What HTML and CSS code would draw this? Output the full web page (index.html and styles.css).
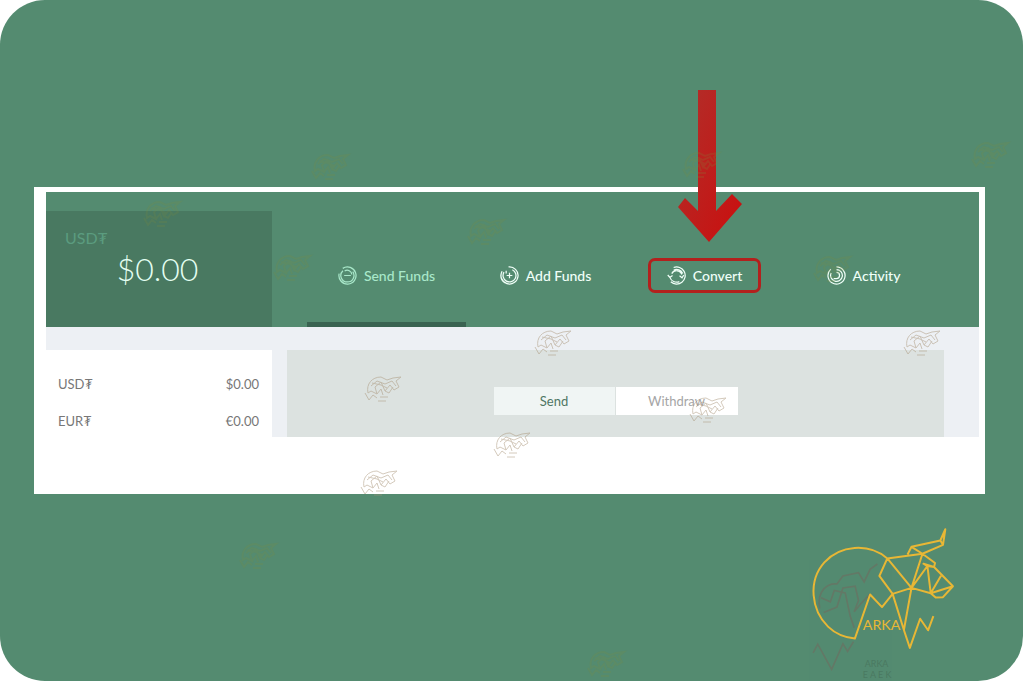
FILE: index.html
```
<!DOCTYPE html>
<html lang="en">

<head>
    <meta charset="UTF-8">
    <meta name="viewport" content="width=device-width, initial-scale=1.0">
    <title>Wallet - Convert</title>

    <link rel="stylesheet" href="styles.css">
</head>

<body>
    <!-- shared bull shape for the logo and the small marks -->
    <svg class="defs" width="0" height="0" aria-hidden="true">
        <symbol id="bull" viewBox="0 0 570 501" overflow="visible">
            <path d="M292 131 C235 83 149 91 102 143 C52 199 62 287 113 337 C137 360 164 370 194 373 L240 240 L276 278 L308 238 L268 184 Z L365 220 L308 238 L342 347 L365 220 L398 117 L292 131 M342 347 L360 401 L391 313 L415 348 L431 305 M353 119 L365 96 L452 77 L467 43 L460 90 L398 117 L365 96 M452 77 L460 90 M398 117 L436 145 L433 157 L401 147 L413 154 L365 220 L423 236 L490 215 L433 157 L413 154 L423 236 L454 183 M423 236 L438 249 L460 248 L490 215" />
        </symbol>
        <symbol id="mark" viewBox="0 0 40 32" overflow="visible">
            <path d="M5 20 C3 11 9 4 18 4 L24 7 L30 5 L38 4 L33 8 L36 14 L31 17 L27 12 L22 18 L18 9 L12 14 L14 21 L8 18 Z M8 13 L14 8 L22 11 L29 8 L33 13 M9 10 L18 12 L24 15 M22 18 L26 20 L30 14 M14 21 L18 16 L20 22 M2 20 L6 27 L10 22 L14 25 M17 24 H25 M15 28 H23" />
        </symbol>
    </svg>

    <main class="card">
        <section class="panel">
            <header class="topbar">
                <div class="balance">
                    <div class="balance-coin">USD₮</div>
                    <div class="balance-total">$0.00</div>
                </div>

                <nav class="tabs">
                    <a href="#send" class="tab active">
                        <span class="tab-label">
                            <svg class="tab-icon" viewBox="0 0 20 20">
                                <path d="M5 2.5 A9 9 0 1 1 1.2 8 M5.2 5 A6.8 6.8 0 0 0 10 16.8 A6.8 6.8 0 0 0 15.5 6 M7 5.2 A5 5 0 0 1 14.6 9 M6.5 10 H13.5" />
                            </svg>
                            Send Funds
                        </span>
                    </a>
                    <a href="#add" class="tab">
                        <span class="tab-label">
                            <svg class="tab-icon" viewBox="0 0 20 20">
                                <path d="M9 1 A9 9 0 1 1 2.2 5.5 M13 3.9 A6.8 6.8 0 1 1 4.2 6.5 M1 9 A9 9 0 0 0 5 17.5 M10 7 V13 M7 10 H13 M6.5 5 V8" />
                            </svg>
                            Add Funds
                        </span>
                    </a>
                    <a href="#convert" class="tab">
                        <span class="tab-label marked">
                            <svg class="tab-icon" viewBox="0 0 20 20">
                                <path d="M7 1.6 A9 9 0 1 1 4 16.6 M0.8 9.5 L3 12 L5.8 10 M3 12 A7.5 7.5 0 0 0 13 16.4 M5 8 A5.8 5.8 0 0 1 15.6 9 M13.2 10.2 L15.8 12.4 L17.6 9.6 M7 4.4 A7 7 0 0 1 16.6 8" />
                            </svg>
                            Convert
                        </span>
                    </a>
                    <a href="#activity" class="tab">
                        <span class="tab-label">
                            <svg class="tab-icon" viewBox="0 0 20 20">
                                <path d="M10 1 A9 9 0 1 1 4 3.3 M10 3.8 A6.2 6.2 0 1 1 4.4 7.3 M10 6.8 A3.2 3.2 0 0 1 10 13.2 H7" />
                            </svg>
                            Activity
                        </span>
                    </a>
                </nav>
            </header>

            <div class="content">
                <ul class="coins">
                    <li><span>USD₮</span><span>$0.00</span></li>
                    <li><span>EUR₮</span><span>€0.00</span></li>
                </ul>

                <div class="form">
                    <button type="button" class="mode selected">Send</button>
                    <button type="button" class="mode">Withdraw</button>
                </div>
            </div>
        </section>

        <!-- arrow pointing at Convert -->
        <svg class="arrow" viewBox="0 0 64 154" aria-hidden="true">
            <linearGradient id="red" x1="0" y1="0" x2="1" y2="1">
                <stop offset="0" stop-color="#b0302b" />
                <stop offset="1" stop-color="#cb0e0e" />
            </linearGradient>
            <path fill="url(#red)" d="M20 1 H38 V122 L54 105 L64 115 L31 153 L0 118 L7 109 L20 122 Z" />
        </svg>

        <!-- small marks -->
        <svg class="marks" viewBox="0 0 1024 682" aria-hidden="true">
            <g class="gold">
                <use href="#mark" x="310" y="151" width="40" height="32" />
                <use href="#mark" x="142" y="198" width="40" height="32" />
                <use href="#mark" x="466" y="216" width="40" height="32" />
                <use href="#mark" x="272" y="252" width="40" height="32" />
                <use href="#mark" x="681" y="149" width="40" height="32" />
                <use href="#mark" x="970" y="139" width="40" height="32" />
                <use href="#mark" x="812" y="253" width="40" height="32" />
                <use href="#mark" x="238" y="540" width="40" height="32" />
                <use href="#mark" x="586" y="648" width="40" height="32" />
            </g>
            <g class="grey">
                <use href="#mark" x="533" y="327" width="40" height="32" />
                <use href="#mark" x="902" y="327" width="40" height="32" />
                <use href="#mark" x="363" y="373" width="40" height="32" />
                <use href="#mark" x="688" y="394" width="40" height="32" />
                <use href="#mark" x="492" y="429" width="40" height="32" />
                <use href="#mark" x="359" y="467" width="40" height="32" />
            </g>
        </svg>

        <svg class="logo" viewBox="0 0 570 501" role="img" aria-label="Arka">
            <g class="logo-shade">
                <path d="M88 282 C78 228 112 205 140 208 L158 184 L205 174 L222 202 L240 164 L262 148 M100 294 L140 278 L158 220 L195 215 L205 258 L192 292 L212 268 L240 238 M92 250 L120 262 L132 228 L165 235 L180 305 L192 340 M68 416 L82 390 L124 466 L158 389 L172 412 L190 382" />
                <text x="224" y="458">ARKA</text>
                <text x="218" y="492">E A E K</text>
            </g>
            <use href="#bull" width="570" height="501" class="logo-line" />
            <text x="218" y="346" class="logo-name">ARKA</text>
        </svg>
    </main>
</body>

</html>
```
FILE: styles.css
```
* {
    box-sizing: border-box;
}

body {
    margin: 0;
    background-color: white;
    font-family: Lato, "Noto Sans", sans-serif;
    font-size: 13px;
}

.defs {
    position: absolute;
}

.card {
    position: relative;
    min-height: calc(100vh - 1px);
    margin: 0 1px 1px 0;
    padding: 187px 38px 0 34px;
    background-color: #548b70;
    border-radius: 45px;
    overflow: hidden;
}

.panel {
    padding: 5px 6px 57px 12px;
    background-color: white;
}

/* green header */
.topbar {
    display: flex;
    background-color: #548b70;
}

.balance {
    width: 226px;
    margin-top: 19px;
    padding: 17px 22px 37px 19px;
    background-color: #497961;
}

.balance-coin {
    font-size: 16px;
    line-height: 20px;
    color: #5b9c7f;
}

.balance-total {
    font-size: 32px;
    font-weight: 300;
    line-height: 42px;
    text-align: center;
    color: #e4fff2;
}

.tabs {
    flex: 1;
    display: grid;
    grid-template-columns: repeat(4, 1fr);
    padding: 0 36px 0 35px;
}

.tab {
    display: flex;
    justify-content: center;
    align-items: flex-start;
    padding-top: 66px;
    border-bottom: 5px solid transparent;
    color: #f0fff8;
    font-size: 14px;
    font-weight: 500;
    text-decoration: none;
}

.tab.active {
    color: #a9e8ca;
    border-bottom-color: #3a6351;
}

.tab-label {
    display: flex;
    align-items: center;
    gap: 7px;
    height: 35px;
}

.marked {
    padding: 0 16px;
    border: 3px solid #b3201d;
    border-radius: 7px;
}

.tab-icon {
    width: 19px;
    height: 19px;
    fill: none;
    stroke: currentColor;
    stroke-width: 1.3;
}

/* lower part */
.content {
    display: flex;
    gap: 15px;
    padding: 23px 35px 0 0;
    background-color: #edf0f4;
}

.coins {
    width: 226px;
    display: flex;
    flex-direction: column;
    gap: 13px;
    margin: 0;
    padding: 22px 13px 4px 12px;
    list-style: none;
    background-color: white;
    color: #777;
}

.coins li {
    display: flex;
    justify-content: space-between;
    line-height: 24px;
}

.form {
    flex: 1;
    display: flex;
    justify-content: center;
    align-items: flex-start;
    padding-top: 37px;
    background-color: #dce2e0;
}

.mode {
    width: 122px;
    height: 28px;
    padding: 0;
    border: none;
    background-color: white;
    color: #a5a5a5;
    font-family: inherit;
    font-size: 13px;
    cursor: pointer;
}

.mode.selected {
    background-color: #f0f5f4;
    border-right: 1px solid #dce2e0;
    color: #4f7663;
}

/* drawings over the card */
.arrow {
    position: absolute;
    top: 89px;
    left: 678px;
    width: 64px;
    height: 154px;
}

.marks {
    position: absolute;
    top: 0;
    left: 0;
    width: 1024px;
    height: 682px;
    fill: none;
    pointer-events: none;
}

.gold {
    stroke: #7d8b3c;
    stroke-width: 2;
    opacity: 0.2;
}

.grey {
    stroke: #a89478;
    stroke-width: 1;
    opacity: 0.5;
}

.logo {
    position: absolute;
    right: 43px;
    bottom: 0;
    width: 190px;
    height: 166px;
    fill: none;
}

.logo-line {
    stroke: #e8b735;
    stroke-width: 6;
    stroke-linejoin: round;
}

.logo-name {
    fill: #e8b735;
    font-size: 43px;
}

.logo-shade {
    stroke: #6c6f62;
    stroke-width: 5;
    opacity: 0.65;
}

.logo-shade text {
    fill: #46705a;
    stroke: none;
    font-size: 27px;
}
```
